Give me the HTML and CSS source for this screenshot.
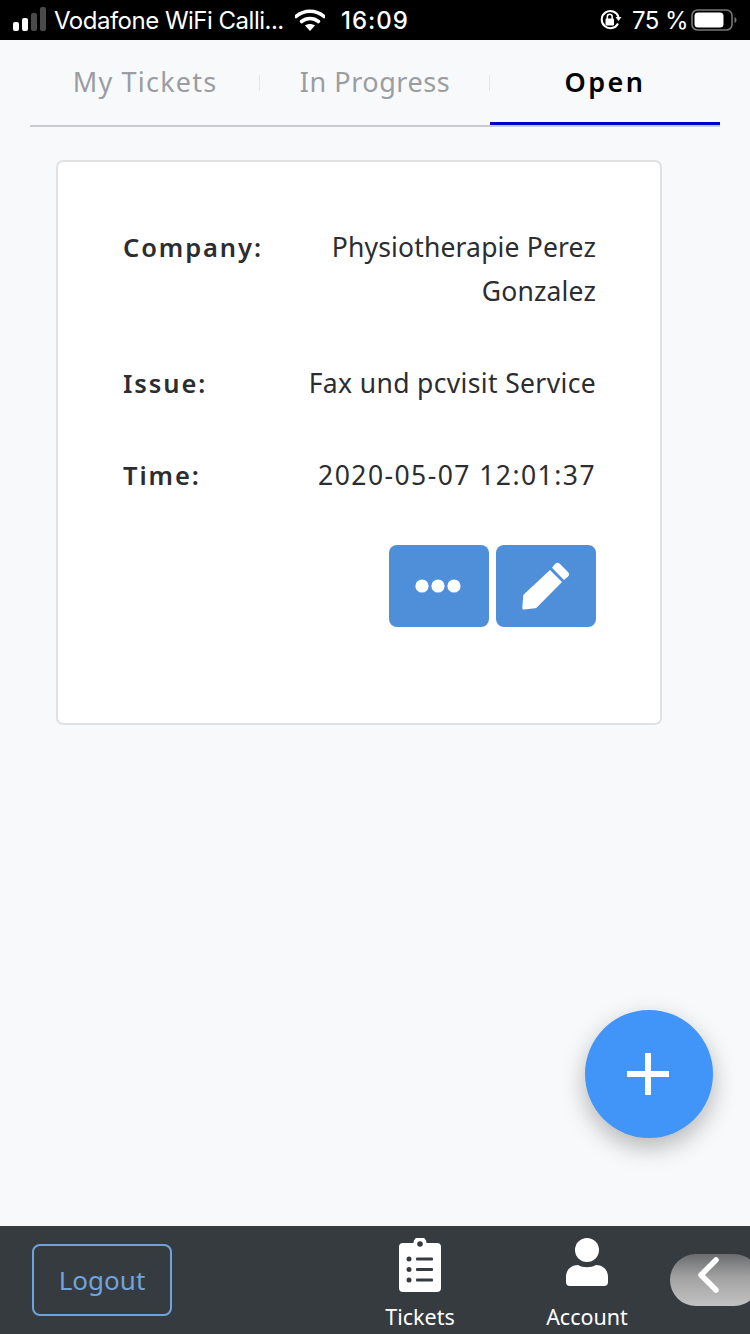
FILE: index.html
```html
<!DOCTYPE html>
<html lang="en">
<head>
<meta charset="utf-8">
<title>Tickets</title>
<link rel="stylesheet" href="styles.css">
</head>
<body>
<div class="app">
  <header class="status">
    <svg class="signal" width="34" height="24" viewBox="0 0 34 24"><rect x="0" y="15" width="6" height="9" rx="2" fill="#fff"/><rect x="9" y="11" width="6" height="13" rx="2" fill="#fff"/><rect x="18" y="6" width="6" height="18" rx="2" fill="#4a4a4a"/><rect x="27" y="0" width="6" height="24" rx="2" fill="#4a4a4a"/></svg>
    <span class="carrier">Vodafone WiFi Calli...</span>
    <svg class="wifi" width="30" height="22" viewBox="0 0 30 22"><path d="M1 7.5C9 .5 21 .5 29 7.5" fill="none" stroke="#fff" stroke-width="3.6" stroke-linecap="round"/><path d="M6.5 12.5c5-4 12-4 17 0" fill="none" stroke="#fff" stroke-width="3.6" stroke-linecap="round"/><path d="M15 22l-5-5.4c3-2 7-2 10 0z" fill="#fff"/></svg>
    <span class="clock">16:09</span>
    <svg class="lock" width="24" height="22" viewBox="0 0 24 22"><path d="M19 14.5A8.6 8.6 0 1 1 19.5 8" fill="none" stroke="#fff" stroke-width="2"/><path d="M16.5 8h6l-3 4z" fill="#fff"/><rect x="6.5" y="9.5" width="8.5" height="7" rx="1" fill="#fff"/><path d="M8.3 10V7.8a2.4 2.4 0 0 1 4.9 0V10" fill="none" stroke="#fff" stroke-width="1.5"/></svg>
    <span class="battery-text">75 %</span>
    <svg class="battery" width="46" height="22" viewBox="0 0 46 22"><rect x="1" y="1" width="40" height="20" rx="5.5" fill="none" stroke="#777" stroke-width="1.6"/><rect x="3.5" y="3.5" width="29" height="15" rx="3.5" fill="#fff"/><path d="M43.5 8v6c1.4-.5 2-1.6 2-3s-.6-2.500-2-3z" fill="#777"/></svg>
  </header>

  <nav class="tabs">
    <div class="tab tab-muted tab-first">My Tickets</div>
    <div class="tab tab-muted tab-second">In Progress</div>
    <div class="tab tab-active">Open</div>
  </nav>

  <main class="content">
    <section class="card">
      <div class="row">
        <div class="label">Company:</div>
        <div class="value">Physiotherapie Perez Gonzalez</div>
      </div>
      <div class="row">
        <div class="label">Issue:</div>
        <div class="value value-issue">Fax und pcvisit Service</div>
      </div>
      <div class="row">
        <div class="label">Time:</div>
        <div class="value value-time">2020-05-07 12:01:37</div>
      </div>
      <div class="actions">
        <button class="action" type="button" aria-label="More">
          <svg class="dots" width="48" height="16" viewBox="0 0 48 16"><circle cx="8" cy="8" r="6.600" fill="#fff"/><circle cx="24" cy="8" r="6.600" fill="#fff"/><circle cx="40" cy="8" r="6.600" fill="#fff"/></svg>
        </button>
        <button class="action" type="button" aria-label="Edit">
          <svg class="pencil" width="48" height="48" viewBox="0 0 48 48"><path d="M28 8l12 12-25 25.200q-.9.800-2 1L2 47.600q-1.800.2-1.700-1.600l.9-12q.1-1 .8-1.700z" fill="#fff"/><path d="M30 5.800l3-3.800q2-2 4.500-.5L46 10q2 2.500 0 4.500L42 18z" fill="#fff"/></svg>
        </button>
      </div>
    </section>
    <button class="fab" type="button" aria-label="Add">
      <svg width="42" height="42" viewBox="0 0 42 42"><path d="M18 0h6v18h18v6H24v18h-6V24H0v-6h18z" fill="#fff"/></svg>
    </button>
  </main>

  <footer class="footer">
    <button class="logout" type="button">Logout</button>
    <div class="nav-item nav-tickets">
      <svg width="42" height="54" viewBox="0 0 42 54"><path d="M4 5h10.500a6.500 6.500 0 0 1 13 0H38a4 4 0 0 1 4 4v41a4 4 0 0 1-4 4H4a4 4 0 0 1-4-4V9a4 4 0 0 1 4-4z" fill="#fff"/><circle cx="21" cy="6" r="2.800" fill="#363b40"/><g fill="#363b40"><circle cx="10" cy="21" r="2.500"/><circle cx="10" cy="31.500" r="2.500"/><circle cx="10" cy="42" r="2.500"/><rect x="17" y="19.500" width="17" height="3" rx="1"/><rect x="17" y="30" width="17" height="3" rx="1"/><rect x="17" y="40.500" width="17" height="3" rx="1"/></g></svg>
      <span class="nav-label">Tickets</span>
    </div>
    <div class="nav-item nav-account">
      <svg width="42" height="48" viewBox="0 0 42 48"><circle cx="21" cy="12" r="12" fill="#fff"/><path d="M12 27c5 3 13 3 18 0 7 0 12 5 12 12v5a4 4 0 0 1-4 4H4a4 4 0 0 1-4-4v-5c0-7 5-12 12-12z" fill="#fff"/></svg>
      <span class="nav-label">Account</span>
    </div>
    <button class="back" type="button" aria-label="Back">
      <svg width="24" height="36" viewBox="0 0 24 36"><path d="M20 3L5 18l15 15" fill="none" stroke="#fff" stroke-width="5.500" stroke-linecap="round" stroke-linejoin="round"/></svg>
    </button>
  </footer>
</div>
</body>
</html>
```
FILE: styles.css
```css
* { box-sizing: border-box; }
html, body { margin: 0; padding: 0; }
body { font-family: "Noto Sans", "Open Sans", sans-serif; color: #212529; background: #f8f9fb; }
button { font-family: inherit; padding: 0; cursor: pointer; }

.app { width: 750px; height: 1334px; display: flex; flex-direction: column; overflow: hidden; }

.status { height: 40px; flex: none; background: #000; color: #fff; display: flex; align-items: center; padding-left: 13px; font-family: Inter, Roboto, sans-serif; font-size: 24px; white-space: nowrap; }
.signal { margin-right: 7px; margin-top: -2px; }
.carrier { width: 241px; font-size: 24px; letter-spacing: -0.5px; }
.wifi { margin-right: 16px; }
.clock { width: 258px; font-weight: 500; font-size: 24px; letter-spacing: 1px; }
.lock { margin-right: 9px; }
.battery-text { width: 59px; letter-spacing: -0.6px; }
.battery { flex: none; }

.tabs { flex: none; height: 87px; margin: 0 30px; display: flex; border-bottom: 2px solid #c9cbce; }
.tab { width: 230px; height: 87px; display: flex; align-items: center; justify-content: center; padding-bottom: 4px; font-size: 27px; position: relative; }
.tab-first { letter-spacing: 1.2px; }
.tab-second { letter-spacing: 0.55px; }
.tab-muted { color: #9a9da1; font-weight: 400; }
.tab-muted::after { content: ""; position: absolute; right: 0; top: 35px; height: 16px; width: 1px; background: #e4e6e8; }
.tab-active { color: #000; font-weight: 600; letter-spacing: 2.4px; border-bottom: 3px solid #0000c8; height: 85px; padding-bottom: 0; }

.content { flex: 1; position: relative; padding: 33px 88px 0 56px; }

.card { width: 606px; height: 565px; background: #fff; border: 2px solid #dfe1e3; border-radius: 7px; padding: 63px 64px 0 65px; }
.row { display: grid; grid-template-columns: 170px 1fr; font-size: 26.500px; line-height: 44px; margin-bottom: 48px; color: #2b2d30; }
.label { font-size: 25.500px; font-weight: 600; letter-spacing: 1.900px; }
.value { text-align: right; letter-spacing: 0.15px; }
.value-issue { letter-spacing: 0.35px; }
.value-time { letter-spacing: 1.450px; }
.actions { display: flex; justify-content: flex-end; gap: 7px; }
.action { width: 100px; height: 82px; border: 0; border-radius: 8px; background: #4f8fd9; display: flex; align-items: center; justify-content: center; }
.dots { margin-right: 2px; }

.fab { position: absolute; left: 585px; top: 883px; width: 128px; height: 128px; border: 0; border-radius: 50%; padding-right: 2px; background: #4195f8; box-shadow: 0 9px 24px rgba(0, 0, 0, 0.28); display: flex; align-items: center; justify-content: center; }

.footer { flex: none; height: 108px; background: #363b40; display: flex; position: relative; padding-left: 32px; color: #fff; }
.logout { width: 140px; height: 72px; margin-top: 18px; background: transparent; border: 2px solid #6fa3dc; border-radius: 8px; color: #6fa3dc; font-size: 26px; }
.nav-item { position: relative; width: 160px; height: 108px; padding-top: 12px; display: flex; flex-direction: column; align-items: center; }
.nav-tickets { margin-left: 168px; }
.nav-account { margin-left: 7px; }
.nav-label { position: absolute; top: 76px; font-size: 21.500px; line-height: 30px; }
.back { position: absolute; left: 670px; top: 28px; width: 90px; height: 52px; border: 0; border-radius: 26px; background: linear-gradient(180deg, #6a6c6e 0%, #a2a2a2 45%, #c2c2c2 100%); display: flex; align-items: flex-start; padding: 3px 0 0 26px; }
```
